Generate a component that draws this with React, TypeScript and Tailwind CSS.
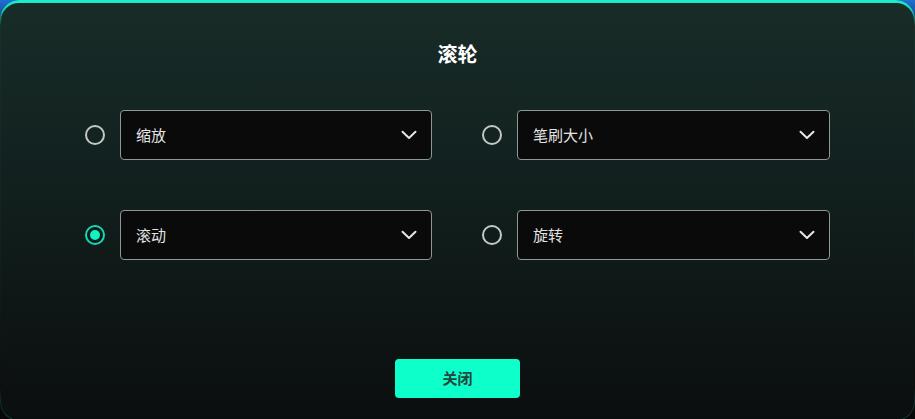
import React from "react";

const font = { fontFamily: '"Noto Sans CJK SC", "Noto Sans", sans-serif' };

function Chevron() {
  return (
    <svg width="16" height="10" viewBox="0 0 16 10" fill="none">
      <path d="M1.5 1.8 L8 8 L14.5 1.8" stroke="#e6e6e6" strokeWidth="2" strokeLinecap="round" strokeLinejoin="round" />
    </svg>
  );
}

function Radio({ checked }: { checked?: boolean }) {
  return checked ? (
    <div className="w-5 h-5 rounded-full border-2 border-[#16d8b0] flex items-center justify-center shrink-0">
      <div className="w-[10px] h-[10px] rounded-full bg-[#14f0c0]" />
    </div>
  ) : (
    <div className="w-5 h-5 rounded-full border-2 border-[#c4c8c6] shrink-0" />
  );
}

function Option({ label, checked, wide }: { label: string; checked?: boolean; wide?: boolean }) {
  return (
    <div className="flex items-center gap-[15px]">
      <Radio checked={checked} />
      <div className={`${wide ? "w-[313px]" : "w-[312px]"} h-[50px] rounded-[4px] border border-[#8d9996] bg-[#0a0a0a] flex items-center justify-between pl-[15px] pr-[14px]`}>
        <span className="text-[15px] text-[#e4e4e4]">{label}</span>
        <Chevron />
      </div>
    </div>
  );
}

export default function App() {
  return (
    <div className="w-[915px] h-[419px] overflow-hidden bg-[linear-gradient(180deg,#1e6fd6_0px,#0c1a2a_40px,#060808_100%)]" style={font}>
      <div className="w-[915px] h-[421px] rounded-[20px] pt-[3px] px-px pb-px bg-[linear-gradient(180deg,#1ef0cc_0px,#16d2b0_10px,#18302b_26px,#12201e_60%,#0b0f0e_92%,#0f5a4e_100%)]">
        <div className="h-full rounded-[18px] bg-[linear-gradient(180deg,#182c28_0%,#12211f_40%,#0b0e0e_100%)] flex flex-col items-center">
          <h1 className="mt-[36px] text-[20px] font-bold text-white leading-[30px]">滚轮</h1>
          <div className="mt-[41px] grid grid-cols-[347px_348px] gap-x-[50px] gap-y-[50px]">
            <Option label="缩放" />
            <Option label="笔刷大小" wide />
            <Option label="滚动" checked />
            <Option label="旋转" wide />
          </div>
          <button className="mt-[99px] w-[125px] h-[39px] rounded-[4px] bg-[#0dffca] text-[15px] font-bold text-[#23463f]">
            关闭
          </button>
        </div>
      </div>
    </div>
  );
}
